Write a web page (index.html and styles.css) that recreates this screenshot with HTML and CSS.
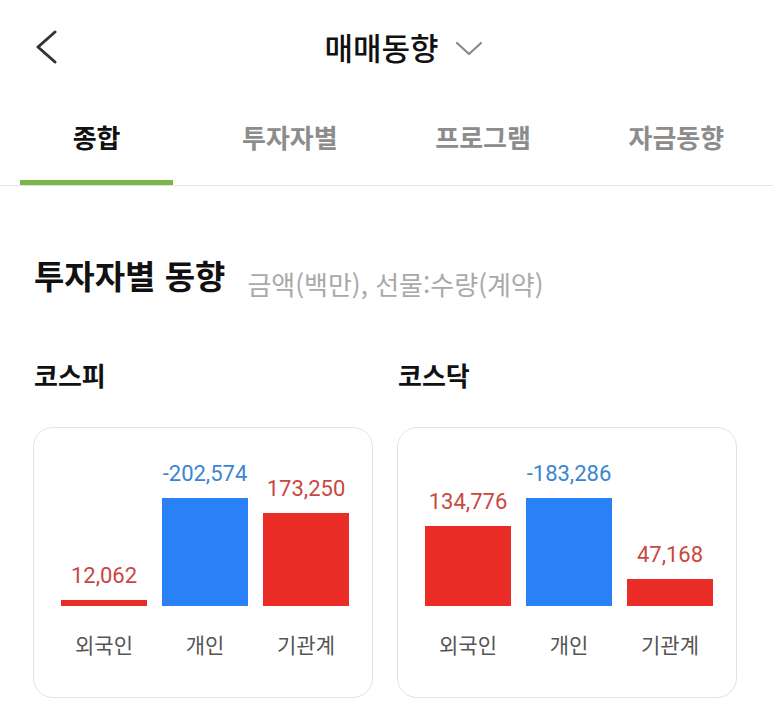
FILE: index.html
```html
<!DOCTYPE html>
<html lang="ko">
<head>
<meta charset="utf-8">
<title>매매동향</title>
<link rel="stylesheet" href="styles.css">
</head>
<body>
<header class="topbar">
  <button class="back" aria-label="뒤로">
    <svg width="24" height="34" viewBox="0 0 24 34"><path d="M20 2 L3 17 L20 32" fill="none" stroke="#333" stroke-width="3" stroke-linecap="round" stroke-linejoin="round"/></svg>
  </button>
  <h1 class="title">매매동향</h1>
  <div class="title-more">
    <svg width="28" height="16" viewBox="0 0 28 16"><path d="M2 3 L14 14 L26 3" fill="none" stroke="#8a8a8a" stroke-width="2.2" stroke-linecap="round" stroke-linejoin="round"/></svg>
  </div>
</header>

<nav class="tabs">
  <div class="tab active"><span class="tab-text">종합</span><span class="tab-bar"></span></div>
  <div class="tab"><span class="tab-text">투자자별</span><span class="tab-bar"></span></div>
  <div class="tab"><span class="tab-text">프로그램</span><span class="tab-bar"></span></div>
  <div class="tab"><span class="tab-text">자금동향</span><span class="tab-bar"></span></div>
</nav>

<main class="content">
  <div class="section-head">
    <h2 class="section-title">투자자별 동향</h2>
    <span class="section-sub">금액(백만), 선물:수량(계약)</span>
  </div>

  <div class="markets">
    <section class="market">
      <h3 class="market-name">코스피</h3>
      <div class="card">
        <div class="chart">
          <div class="col"><span class="val up">12,062</span><div class="bar up" style="height:6px"></div></div>
          <div class="col"><span class="val down">-202,574</span><div class="bar down" style="height:108px"></div></div>
          <div class="col"><span class="val up">173,250</span><div class="bar up" style="height:93px"></div></div>
        </div>
        <div class="labels">
          <span class="lab">외국인</span><span class="lab">개인</span><span class="lab">기관계</span>
        </div>
      </div>
    </section>
    <section class="market">
      <h3 class="market-name">코스닥</h3>
      <div class="card">
        <div class="chart">
          <div class="col"><span class="val up">134,776</span><div class="bar up" style="height:80px"></div></div>
          <div class="col"><span class="val down">-183,286</span><div class="bar down" style="height:108px"></div></div>
          <div class="col"><span class="val up">47,168</span><div class="bar up" style="height:27px"></div></div>
        </div>
        <div class="labels">
          <span class="lab">외국인</span><span class="lab">개인</span><span class="lab">기관계</span>
        </div>
      </div>
    </section>
  </div>
</main>
</body>
</html>
```

FILE: styles.css
```css
* { box-sizing: border-box; }
html, body { margin: 0; padding: 0; background: #fff; }
body {
  font-family: "Noto Sans CJK KR", "Noto Sans", sans-serif;
  color: #111;
  width: 773px;
}

.topbar {
  height: 94px;
  display: grid;
  grid-template-columns: 1fr auto 1fr;
  align-items: center;
  padding-right: 10px;
}
.back {
  justify-self: start;
  margin-left: 35px;
  padding: 0;
  border: 0;
  background: none;
  display: flex;
}
.title {
  margin: 0;
  font-size: 31px;
  font-weight: 500;
  line-height: 40px;
  color: #111;
}
.title-more {
  display: flex;
  margin-left: 16px;
  margin-top: 2px;
}

.tabs {
  display: flex;
  border-bottom: 1.5px solid #e3e3e3;
}
.tab {
  flex: 1;
  display: flex;
  flex-direction: column;
  align-items: center;
  padding-top: 26px;
}
.tab-text {
  font-size: 26px;
  font-weight: 700;
  line-height: 34px;
  color: #8c8c8c;
}
.tab-bar {
  align-self: stretch;
  margin: 26px 20px 0;
  height: 5px;
}
.tab.active .tab-text { color: #111; }
.tab.active .tab-bar { background: #7ab648; }

.content {
  padding: 67px 36px 0 33px;
}
.section-head {
  display: flex;
  align-items: flex-start;
  gap: 22px;
  padding-left: 1px;
}
.section-title {
  margin: 0;
  font-size: 33px;
  font-weight: 700;
  line-height: 44px;
  color: #111;
}
.section-sub {
  margin-top: 16px;
  font-size: 26px;
  color: #a9a9a9;
  line-height: 30px;
}

.markets {
  display: grid;
  grid-template-columns: 1fr 1fr;
  gap: 24px;
  margin-top: 59px;
}
.market-name {
  margin: 0 0 35px 1px;
  font-size: 26px;
  font-weight: 700;
  line-height: 34px;
  color: #111;
}
.card {
  border: 1.5px solid #e2e2e2;
  border-radius: 20px;
  padding: 0 0 38px 27px;
}
.chart {
  height: 178px;
  display: flex;
  align-items: flex-end;
  gap: 15px;
}
.col {
  width: 86px;
  display: flex;
  flex-direction: column;
  align-items: center;
}
.val {
  font-family: Roboto, "Liberation Sans", sans-serif;
  font-size: 22px;
  line-height: 26px;
  margin-bottom: 11px;
  white-space: nowrap;
}
.val.up { color: #c9483f; }
.val.down { color: #3a85d2; }
.bar { width: 86px; }
.bar.up { background: #ea2e27; }
.bar.down { background: #2a80f6; }

.labels {
  display: flex;
  gap: 15px;
  margin-top: 23px;
}
.lab {
  width: 86px;
  text-align: center;
  font-size: 21px;
  line-height: 30px;
  color: #555;
}
```
